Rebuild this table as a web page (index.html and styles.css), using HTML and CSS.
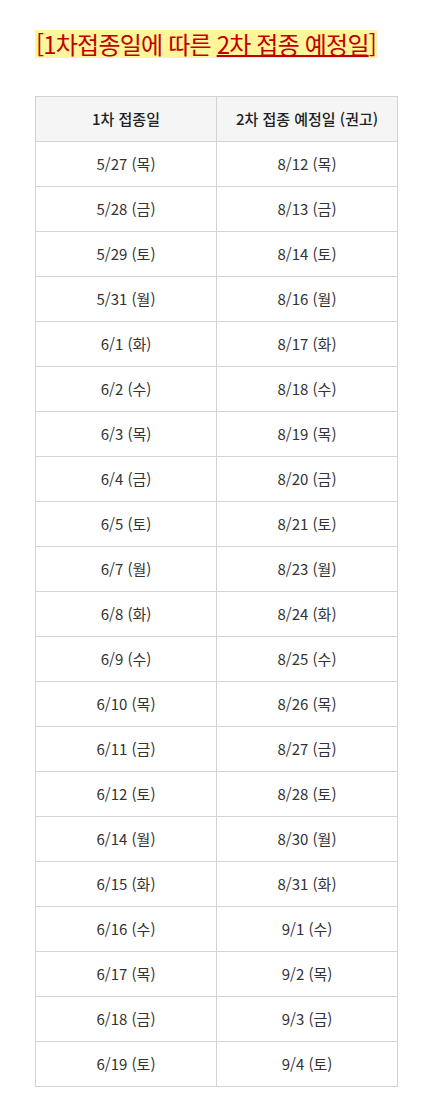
FILE: index.html
```html
<!DOCTYPE html>
<html lang="ko">
<head>
<meta charset="utf-8">
<link rel="stylesheet" href="styles.css">
</head>
<body>
<div class="page">
  <h2 class="title"><span class="hl">[1차접종일에 따른 <u>2차 접종 예정일</u>]</span></h2>
  <table class="sched">
    <thead>
      <tr><th>1차 접종일</th><th>2차 접종 예정일 (권고)</th></tr>
    </thead>
    <tbody>
      <tr><td>5/27 (목)</td><td>8/12 (목)</td></tr>
      <tr><td>5/28 (금)</td><td>8/13 (금)</td></tr>
      <tr><td>5/29 (토)</td><td>8/14 (토)</td></tr>
      <tr><td>5/31 (월)</td><td>8/16 (월)</td></tr>
      <tr><td>6/1 (화)</td><td>8/17 (화)</td></tr>
      <tr><td>6/2 (수)</td><td>8/18 (수)</td></tr>
      <tr><td>6/3 (목)</td><td>8/19 (목)</td></tr>
      <tr><td>6/4 (금)</td><td>8/20 (금)</td></tr>
      <tr><td>6/5 (토)</td><td>8/21 (토)</td></tr>
      <tr><td>6/7 (월)</td><td>8/23 (월)</td></tr>
      <tr><td>6/8 (화)</td><td>8/24 (화)</td></tr>
      <tr><td>6/9 (수)</td><td>8/25 (수)</td></tr>
      <tr><td>6/10 (목)</td><td>8/26 (목)</td></tr>
      <tr><td>6/11 (금)</td><td>8/27 (금)</td></tr>
      <tr><td>6/12 (토)</td><td>8/28 (토)</td></tr>
      <tr><td>6/14 (월)</td><td>8/30 (월)</td></tr>
      <tr><td>6/15 (화)</td><td>8/31 (화)</td></tr>
      <tr><td>6/16 (수)</td><td>9/1 (수)</td></tr>
      <tr><td>6/17 (목)</td><td>9/2 (목)</td></tr>
      <tr><td>6/18 (금)</td><td>9/3 (금)</td></tr>
      <tr><td>6/19 (토)</td><td>9/4 (토)</td></tr>
    </tbody>
  </table>
</div>
</body>
</html>
```
FILE: styles.css
```css
html, body {
  margin: 0;
  padding: 0;
  background: #fff;
}
.page {
  padding: 30px 0 0 35px;
  font-family: "Noto Sans CJK KR", "Noto Sans", sans-serif;
  color: #333;
}
.title {
  margin: 0 0 38px 0;
  height: 28px;
  font-size: 24px;
  font-weight: 400;
  line-height: 28px;
  color: #c00000;
}
.hl {
  display: inline-block;
  background: #fff59a;
  padding: 0 1px;
  letter-spacing: -0.8px;
}
.hl u {
  text-decoration-thickness: 2px;
  text-underline-offset: 1px;
}
.sched {
  border-collapse: collapse;
  width: 363px;
  table-layout: fixed;
  font-size: 15px;
}
.sched th,
.sched td {
  border: 1px solid #d3d3d3;
  height: 44px;
  padding: 0;
  text-align: center;
  vertical-align: middle;
  line-height: 20px;
}
.sched th {
  background: #f5f5f5;
  font-weight: 500;
  color: #222;
}
.sched td {
  color: #333;
}
```
